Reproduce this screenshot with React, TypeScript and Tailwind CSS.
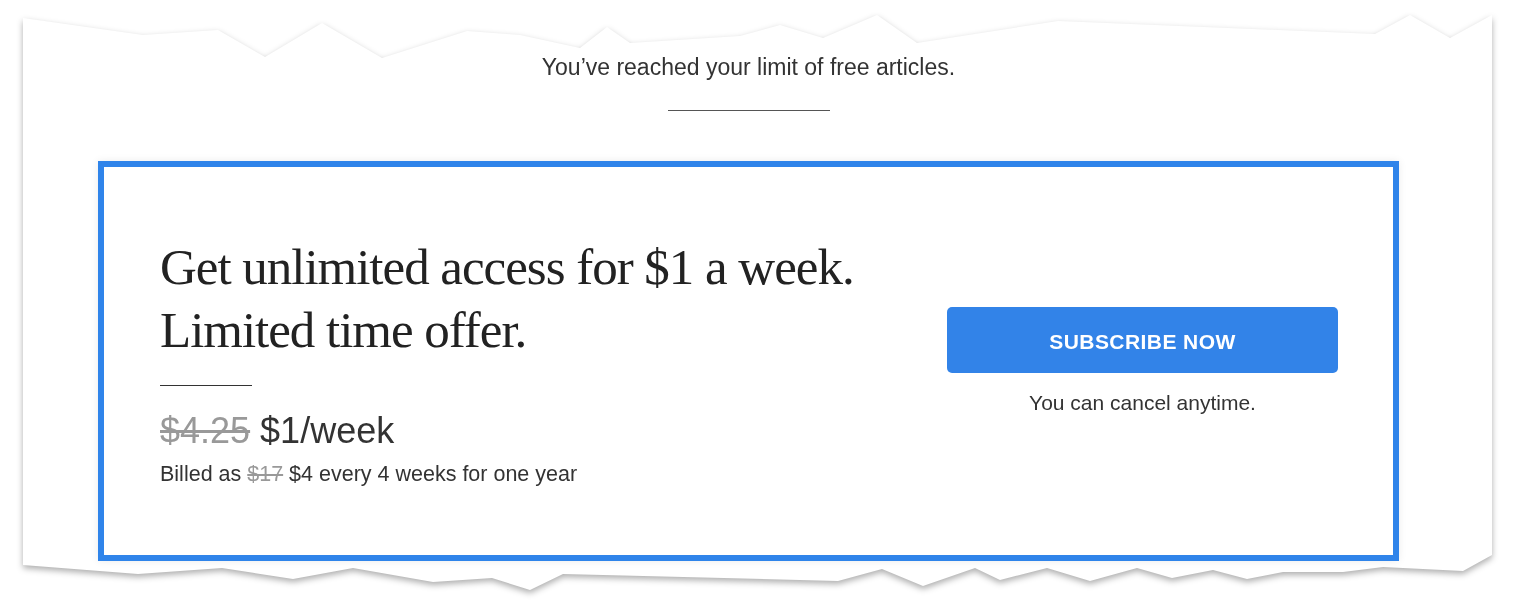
const sans = "font-['Liberation_Sans',Arial,sans-serif]";

const tornEdge =
  "[clip-path:polygon(0_3px,120px_20px,195px_15px,242px_42px,299px_8px,359px_43px,444px_16px,497px_20px,557px_33px,584px_12px,607px_28px,717px_21px,757px_10px,800px_23px,854px_0,894px_28px,1035px_6px,1352px_19px,1387px_0,1427px_23px,100%_0,100%_540px,1440px_556px,1360px_552px,1320px_557px,1260px_557px,1224px_564px,1190px_555px,1149px_563px,1114px_553px,1067px_566px,1024px_553px,977px_565px,952px_553px,900px_571px,859px_554px,815px_566px,540px_559px,507px_575px,469px_563px,410px_567px,330px_553px,270px_564px,199px_553px,115px_559px,0_550px)]";

function OfferBox() {
  return (
    <div className="flex h-[400px] w-[1301px] items-center justify-between border-[6px] border-[#2f84ea] pl-[56px] pr-[55px] shadow-[0_0_8px_rgba(0,0,0,0.08)]">
      <div className="flex flex-col">
        <h1 className="font-['Liberation_Serif','Times_New_Roman',serif] text-[51px] leading-[63px] tracking-[-0.02em] text-[#222]">
          Get unlimited access for $1 a week.
          <br />
          Limited time offer.
        </h1>
        <div className="mt-[23px] h-px w-[92px] bg-[#333]" />
        <p className={`${sans} mt-[25px] text-[36px] leading-[40px] text-[#333]`}>
          <span className="text-[#999] line-through">$4.25</span> $1/week
        </p>
        <p className={`${sans} mt-[10px] text-[21.5px] leading-[26px] text-[#333]`}>
          Billed as <span className="text-[#999] line-through">$17</span> $4 every 4 weeks for one year
        </p>
      </div>

      <div className="flex w-[391px] flex-col items-center">
        <button className={`${sans} h-[66px] w-full rounded-[5px] bg-[#3283e8] pt-[4px] text-[21px] font-bold tracking-[0.02em] text-white`}>
          SUBSCRIBE NOW
        </button>
        <p className={`${sans} mt-[17px] text-[21px] leading-[26px] text-[#333]`}>
          You can cancel anytime.
        </p>
      </div>
    </div>
  );
}

export default function App() {
  return (
    <div className="h-[605px] w-[1520px] overflow-hidden bg-white">
      <div className="pl-[23px] pt-[15px] [filter:drop-shadow(0_3px_3px_rgba(0,0,0,0.32))]">
        <div className={`h-[575px] w-[1469px] bg-white ${tornEdge}`}>
          <div className="flex w-[1301px] flex-col items-center ml-[75px] pt-[37px]">
            <p className={`${sans} text-center text-[23px] leading-[30px] text-[#333]`}>
              You’ve reached your limit of free articles.
            </p>
            <div className="mt-[28px] h-px w-[162px] bg-[#555]" />
            <div className="mt-[50px]">
              <OfferBox />
            </div>
          </div>
        </div>
      </div>
    </div>
  );
}
